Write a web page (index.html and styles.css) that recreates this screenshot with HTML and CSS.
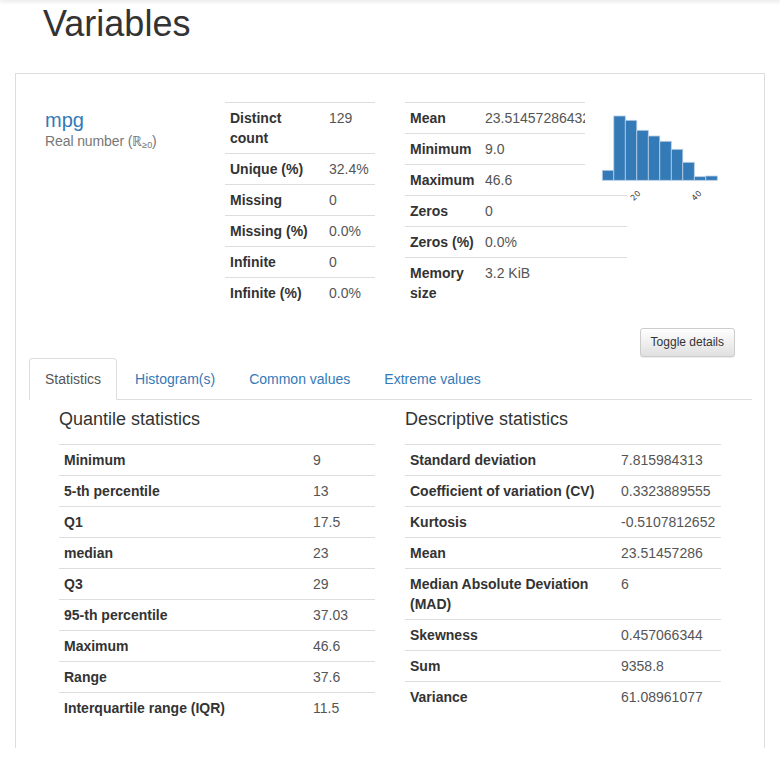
FILE: index.html
```html
<!DOCTYPE html>
<html lang="en">
  <head>
    <meta charset="utf-8" />
    <link rel="stylesheet" href="styles.css">
    <title>Profile report - Variables</title>
  </head>
  <body>
    <div class="topbar"></div>
    <h1 class="page-title">Variables</h1>

    <div class="variable">
      <div class="variable-head">
        <div class="variable-name">
          <a href="#" class="var-link">mpg</a>
          <div class="var-type">Real number (&#8477;<sub>&ge;0</sub>)</div>
        </div>

        <table class="info-table info-left">
          <colgroup><col class="c-label1" /><col /></colgroup>
          <tr><th>Distinct count</th><td>129</td></tr>
          <tr><th>Unique (%)</th><td>32.4%</td></tr>
          <tr><th>Missing</th><td>0</td></tr>
          <tr><th>Missing (%)</th><td>0.0%</td></tr>
          <tr><th>Infinite</th><td>0</td></tr>
          <tr><th>Infinite (%)</th><td>0.0%</td></tr>
        </table>

        <div class="info-right">
          <table class="info-table">
            <colgroup><col class="c-label2" /><col /></colgroup>
            <tr><th>Mean</th><td>23.514572864321607</td></tr>
            <tr><th>Minimum</th><td>9.0</td></tr>
            <tr><th>Maximum</th><td>46.6</td></tr>
            <tr><th>Zeros</th><td>0</td></tr>
            <tr><th>Zeros (%)</th><td>0.0%</td></tr>
            <tr><th>Memory size</th><td>3.2 KiB</td></tr>
          </table>

          <svg class="mini-hist" width="150" height="96" viewBox="0 0 150 96">
            <g fill="#337ab7" stroke="#b9cfe6" stroke-width="0.8">
              <rect x="17.3" y="72.3" width="11.5" height="10" />
              <rect x="28.8" y="18" width="11.5" height="64.3" />
              <rect x="40.3" y="22.3" width="11.5" height="60" />
              <rect x="51.8" y="32.3" width="11.5" height="50" />
              <rect x="63.3" y="38" width="11.5" height="44.3" />
              <rect x="74.8" y="43.3" width="11.5" height="39" />
              <rect x="86.3" y="51.3" width="11.5" height="31" />
              <rect x="97.8" y="64.3" width="11.5" height="18" />
              <rect x="109.3" y="78.7" width="11.5" height="3.6" />
              <rect x="120.8" y="78" width="11.5" height="4.3" />
            </g>
            <g class="tick" font-size="8" fill="#333" text-anchor="end">
              <text transform="translate(56 96) rotate(-45)">20</text>
              <text transform="translate(117 96) rotate(-45)">40</text>
            </g>
          </svg>
        </div>
      </div>

      <div class="toggle-row">
        <button class="btn-toggle">Toggle details</button>
      </div>

      <ul class="nav-tabs">
        <li class="active"><a href="#">Statistics</a></li>
        <li><a href="#">Histogram(s)</a></li>
        <li><a href="#">Common values</a></li>
        <li><a href="#">Extreme values</a></li>
      </ul>

      <div class="tab-content">
        <div class="stats-col">
          <h4>Quantile statistics</h4>
          <table class="stats-table">
            <colgroup><col class="c-quant" /><col /></colgroup>
            <tr><th>Minimum</th><td>9</td></tr>
            <tr><th>5-th percentile</th><td>13</td></tr>
            <tr><th>Q1</th><td>17.5</td></tr>
            <tr><th>median</th><td>23</td></tr>
            <tr><th>Q3</th><td>29</td></tr>
            <tr><th>95-th percentile</th><td>37.03</td></tr>
            <tr><th>Maximum</th><td>46.6</td></tr>
            <tr><th>Range</th><td>37.6</td></tr>
            <tr><th>Interquartile range (IQR)</th><td>11.5</td></tr>
          </table>
        </div>
        <div class="stats-col">
          <h4>Descriptive statistics</h4>
          <table class="stats-table">
            <colgroup><col class="c-desc" /><col /></colgroup>
            <tr><th>Standard deviation</th><td>7.815984313</td></tr>
            <tr><th>Coefficient of variation (CV)</th><td>0.3323889555</td></tr>
            <tr><th>Kurtosis</th><td>-0.5107812652</td></tr>
            <tr><th>Mean</th><td>23.51457286</td></tr>
            <tr><th>Median Absolute Deviation (MAD)</th><td>6</td></tr>
            <tr><th>Skewness</th><td>0.457066344</td></tr>
            <tr><th>Sum</th><td>9358.8</td></tr>
            <tr><th>Variance</th><td>61.08961077</td></tr>
          </table>
        </div>
      </div>
    </div>
  </body>
</html>
```

FILE: styles.css
```css
body {
  margin: 0;
  font-family: "Liberation Sans", Arial, Helvetica, sans-serif;
  font-size: 14px;
  line-height: 20px;
  color: #333;
  background: #fff;
}

.topbar {
  height: 0;
  box-shadow: 0 0 4px 1px rgba(0, 0, 0, 0.18);
}

.page-title {
  margin: 0 0 29px 43px;
  padding-top: 4px;
  font-size: 36px;
  line-height: 39.6px;
  font-weight: 500;
}

.variable {
  margin-left: 15px;
  width: 750px;
  box-sizing: border-box;
  border: 1px solid #ddd;
  border-bottom: none;
  padding: 28px 12px 25px 13px;
}

.variable-head {
  display: flex;
  align-items: flex-start;
}

.variable-name {
  width: 196px;
  box-sizing: border-box;
  padding: 7px 0 0 16px;
}

.var-link {
  display: block;
  font-size: 20px;
  line-height: 22px;
  color: #337ab7;
  text-decoration: none;
}

.var-type {
  color: #777;
  font-size: 14px;
  letter-spacing: -0.1px;
}

.var-type sub {
  font-size: 9px;
  line-height: 0;
  vertical-align: -2px;
}

table {
  border-collapse: collapse;
  border-spacing: 0;
  table-layout: fixed;
}

.info-table th,
.info-table td,
.stats-table th,
.stats-table td {
  border-top: 1px solid #ddd;
  padding: 5px;
  line-height: 20px;
  text-align: left;
  vertical-align: top;
}

.info-table th,
.stats-table th {
  font-weight: bold;
  color: #333;
}

.info-table td,
.stats-table td {
  color: #555;
  white-space: nowrap;
  overflow: hidden;
}

.info-left {
  width: 150px;
}

.c-label1 {
  width: 99px;
}

.c-label2 {
  width: 75px;
}

.info-right {
  position: relative;
  margin-left: 30px;
  width: 222px;
}

.info-right .info-table {
  width: 222px;
}

.info-right th {
  padding-right: 3px;
}

.mini-hist {
  position: absolute;
  left: 180px;
  top: -4px;
  background: #fff;
  overflow: visible;
}

.tick {
  font-family: "DejaVu Sans", sans-serif;
}

.toggle-row {
  margin-top: 20px;
  padding-right: 17px;
  text-align: right;
}

.btn-toggle {
  font-family: inherit;
  font-size: 12px;
  line-height: 17px;
  padding: 5px 10px;
  color: #333;
  border: 1px solid #ccc;
  border-radius: 3px;
  background-image: linear-gradient(to bottom, #fff 0, #e0e0e0 100%);
  box-shadow: inset 0 1px 0 rgba(255, 255, 255, 0.15), 0 1px 1px rgba(0, 0, 0, 0.075);
  cursor: pointer;
}

.nav-tabs {
  list-style: none;
  margin: 1px 0 0;
  padding: 0;
  display: flex;
  border-bottom: 1px solid #ddd;
}

.nav-tabs li {
  margin-right: 2px;
  margin-bottom: -1px;
}

.nav-tabs a {
  display: block;
  padding: 10px 15px;
  line-height: 20px;
  border: 1px solid transparent;
  border-radius: 4px 4px 0 0;
  color: #337ab7;
  text-decoration: none;
}

.nav-tabs .active a {
  color: #555;
  background: #fff;
  border-color: #ddd #ddd transparent;
}

.tab-content {
  display: flex;
  gap: 30px;
  padding: 0 30px;
}

.stats-col {
  width: 316px;
}

.stats-col h4 {
  margin: 9px 0 15px;
  font-size: 18px;
  line-height: 20px;
  font-weight: 500;
}

.stats-table {
  width: 316px;
}

.c-quant {
  width: 249px;
}

.c-desc {
  width: 211px;
}
```
